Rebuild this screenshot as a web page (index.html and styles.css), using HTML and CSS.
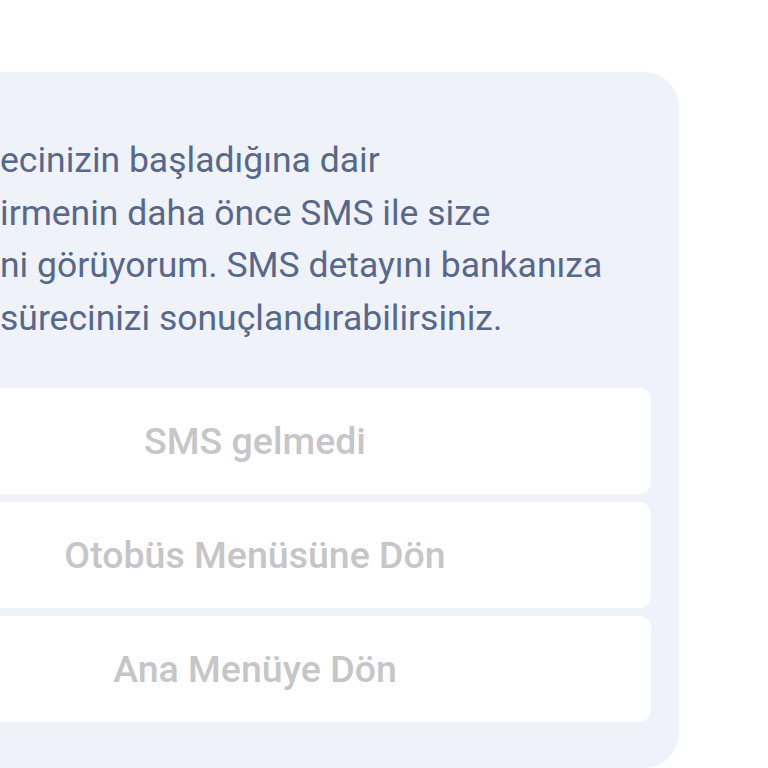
FILE: index.html
```html
<!DOCTYPE html>
<html lang="tr">
<head>
    <meta charset="UTF-8">
    <meta name="viewport" content="width=device-width, initial-scale=1.0">
    <title>Bilet iade</title>
    <link rel="stylesheet" href="styles.css">
</head>
<body>
    <main class="chat">
        <section class="bubble">
            <p class="bubble-text">ecinizin başladığına dair<br>irmenin daha önce SMS ile size<br>ni görüyorum. SMS detayını bankanıza<br>sürecinizi sonuçlandırabilirsiniz.</p>
            <div class="choices">
                <button type="button" class="choice">SMS gelmedi</button>
                <button type="button" class="choice">Otobüs Menüsüne Dön</button>
                <button type="button" class="choice">Ana Menüye Dön</button>
            </div>
        </section>
    </main>
</body>
</html>
```

FILE: styles.css
```css
html, body {
    margin: 0;
    padding: 0;
    background: #ffffff;
    overflow: hidden;
}
body {
    font-family: Roboto, "Noto Sans", sans-serif;
}
.chat {
    padding-top: 72px;
    height: 768px;
    box-sizing: border-box;
}
.bubble {
    width: 848px;
    margin-left: -169px;
    box-sizing: border-box;
    padding: 62px 28px 46px 169px;
    background: #eff2f8;
    border-radius: 36px;
    box-shadow: 0 0 2px rgba(0, 0, 0, 0.04);
}
.bubble-text {
    margin: 0 0 44px 0;
    font-size: 35.5px;
    line-height: 52.5px;
    color: #57688b;
}
.choices {
    display: flex;
    flex-direction: column;
    gap: 8px;
    margin-left: -141px;
}
.choice {
    height: 106px;
    border: none;
    border-radius: 12px;
    background: #ffffff;
    font-family: Roboto, "Noto Sans", sans-serif;
    font-size: 37.5px;
    font-weight: 500;
    color: #c6c6c8;
    cursor: pointer;
}
```
